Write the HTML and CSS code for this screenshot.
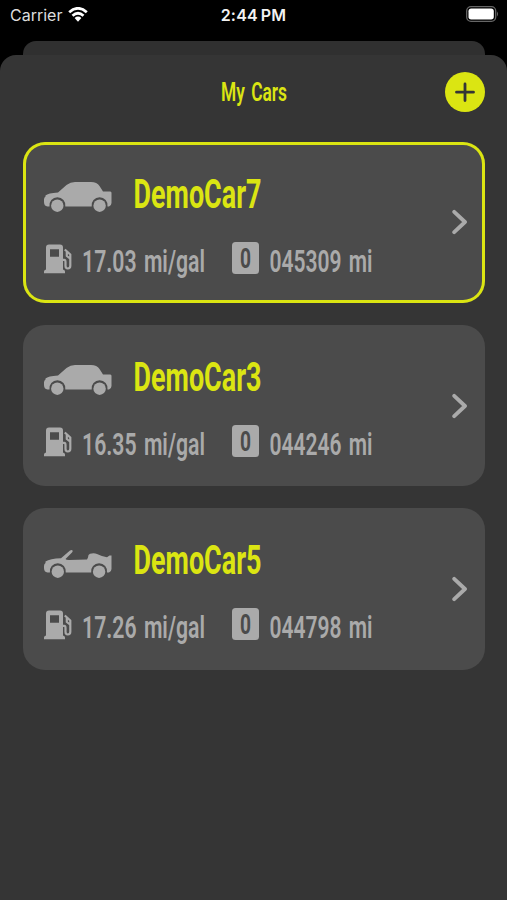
FILE: index.html
```
<!DOCTYPE html>
<html lang="en">
<head>
<meta charset="utf-8">
<title>My Cars</title>
<link rel="stylesheet" href="styles.css">
</head>
<body>
<svg class="defs" aria-hidden="true">
  <symbol id="sedan" viewBox="0 0 68 32">
    <path d="M3.500 25.500 Q0 25 0 21 V18.500 Q0 16.500 1.500 15.500 V14.500 Q4 12 14 11.500 L22.500 4 Q26.500 1 31 1 H47 Q53 1 55.500 5 L59 10.500 H66.500 Q68 11 67.500 13 V22 Q67.500 24.500 65 25.500 H63.500 A8 8 0 1 0 47.700 25.500 H21.300 A8 8 0 1 0 5.500 25.500Z"/>
    <circle cx="13.300" cy="24.700" r="6.200"/><circle cx="55.600" cy="24.700" r="6.200"/>
  </symbol>
  <symbol id="roadster" viewBox="0 0 68 32">
    <path d="M3.500 25.500 Q0 25 0 21 V19 Q0 17 1.500 16 V14.500 Q6 11.500 17 11.200 L26 3.500 Q27.800 2.300 28.600 3.500 Q29 4.500 28 5.500 L21.500 12 Q22 13 25 13 L43 12.500 L44 10.500 Q44 7.500 46 6.800 Q50 5.700 53 7 Q58 9.500 63 10.300 L65.500 8.500 H67.500 V22 Q67.500 24.500 65 25.500 H63 A8 8 0 1 0 47.200 25.500 H21.700 A8 8 0 1 0 5.900 25.500Z"/>
    <circle cx="13.800" cy="24.700" r="6.200"/><circle cx="55.100" cy="24.700" r="6.200"/>
  </symbol>
  <symbol id="pump" viewBox="0 0 28 30">
    <path fill-rule="evenodd" d="M2 25.500 V3.500 Q2 .5 5 .5 H16 Q19 .5 19 3.500 V25.500 Q21 26 21 27.500 V29.300 H0 V27.500 Q0 26 2 25.500Z M6 5.200 V12.700 H15 V5.200Z"/>
    <path class="hose" d="M19 15.800 H20.200 Q21.500 15.800 21.500 18 V21.800 Q21.500 24.500 23.800 24.500 Q26.300 24.500 26.300 21.800 V10.500 L20.800 5.500 M22.800 8 V12 L26 14.500"/>
  </symbol>
  <symbol id="chevron" viewBox="0 0 16 26"><path class="arrow" d="M2.200 2.800 L13 13 L2.200 23.200"/></symbol>
</svg>
<header class="status">
  <span class="carrier">Carrier
    <svg class="wifi" viewBox="0 0 20 15"><path class="waves" d="M1.200 5.200 Q10-2.500 18.800 5.200 M4.500 8.700 Q10 3.800 15.500 8.700"/><path d="M6.600 11 Q10 8.200 13.400 11 L10 14.800Z"/></svg>
  </span>
  <span class="clock">2:44<span class="meridiem">PM</span></span>
  <svg class="battery" viewBox="0 0 33 16"><rect class="shell" x=".7" y=".7" width="29" height="14.600" rx="4.300"/><rect x="2.500" y="2.500" width="25.300" height="11" rx="2.700"/><path class="tip" d="M31 5.500 Q33 8 31 10.500Z"/></svg>
</header>
<div class="backsheet"></div>
<main class="sheet">
  <div class="titlebar">
    <svg class="title" width="68" height="36"><text x="1" y="26" textLength="66" lengthAdjust="spacingAndGlyphs">My Cars</text></svg>
    <button class="add" aria-label="Add car"><svg viewBox="0 0 40 40"><path d="M20 12 V28.500 M11.500 20.200 H28.500"/></svg></button>
  </div>
  <section class="cars">
    <article class="card selected">
      <div class="details">
        <div class="heading"><svg class="car"><use href="#sedan"/></svg><svg class="name" width="130" height="48"><text x=".5" y="36" textLength="128" lengthAdjust="spacingAndGlyphs">DemoCar7</text></svg></div>
        <div class="stats"><svg class="pump"><use href="#pump"/></svg><svg class="stat economy" width="124" height="40"><text x="0" y="30" textLength="123" lengthAdjust="spacingAndGlyphs">17.03 mi/gal</text></svg><svg class="badge" width="27" height="32"><rect width="27" height="32" rx="3.500"/><text x="8" y="26" textLength="11" lengthAdjust="spacingAndGlyphs">0</text></svg><svg class="stat" width="104" height="40"><text x="-.5" y="30" textLength="103" lengthAdjust="spacingAndGlyphs">045309 mi</text></svg></div>
      </div>
      <svg class="chevron"><use href="#chevron"/></svg>
    </article>
    <article class="card">
      <div class="details">
        <div class="heading"><svg class="car"><use href="#sedan"/></svg><svg class="name" width="130" height="48"><text x=".5" y="36" textLength="128" lengthAdjust="spacingAndGlyphs">DemoCar3</text></svg></div>
        <div class="stats"><svg class="pump"><use href="#pump"/></svg><svg class="stat economy" width="124" height="40"><text x="0" y="30" textLength="123" lengthAdjust="spacingAndGlyphs">16.35 mi/gal</text></svg><svg class="badge" width="27" height="32"><rect width="27" height="32" rx="3.500"/><text x="8" y="26" textLength="11" lengthAdjust="spacingAndGlyphs">0</text></svg><svg class="stat" width="104" height="40"><text x="-.5" y="30" textLength="103" lengthAdjust="spacingAndGlyphs">044246 mi</text></svg></div>
      </div>
      <svg class="chevron"><use href="#chevron"/></svg>
    </article>
    <article class="card">
      <div class="details">
        <div class="heading"><svg class="car"><use href="#roadster"/></svg><svg class="name" width="130" height="48"><text x=".5" y="36" textLength="128" lengthAdjust="spacingAndGlyphs">DemoCar5</text></svg></div>
        <div class="stats"><svg class="pump"><use href="#pump"/></svg><svg class="stat economy" width="124" height="40"><text x="0" y="30" textLength="123" lengthAdjust="spacingAndGlyphs">17.26 mi/gal</text></svg><svg class="badge" width="27" height="32"><rect width="27" height="32" rx="3.500"/><text x="8" y="26" textLength="11" lengthAdjust="spacingAndGlyphs">0</text></svg><svg class="stat" width="104" height="40"><text x="-.5" y="30" textLength="103" lengthAdjust="spacingAndGlyphs">044798 mi</text></svg></div>
      </div>
      <svg class="chevron"><use href="#chevron"/></svg>
    </article>
  </section>
</main>
</body>
</html>
```
FILE: styles.css
```
* { box-sizing: border-box; }
body {
  margin: 0;
  height: 900px;
  display: flex;
  flex-direction: column;
  overflow: hidden;
  background: #000;
  font-family: Roboto, sans-serif;
}
svg { display: block; flex: none; }
.defs { position: absolute; width: 0; height: 0; }
.status {
  height: 41px;
  padding: 6px 8px 0 10px;
  display: grid;
  grid-template-columns: 1fr auto 1fr;
  align-items: start;
  font: 16px/19px Inter, sans-serif;
  color: #ddd;
}
.carrier { display: flex; gap: 6px; }
.wifi { width: 20px; height: 15px; margin-top: 1px; fill: #fff; }
.waves { fill: none; stroke: #fff; stroke-width: 2.800; }
.clock { font-weight: 600; color: #f2f2f2; letter-spacing: .2px; margin-left: -2px; }
.meridiem { margin-left: 3px; }
.battery { width: 33px; height: 16px; justify-self: end; fill: #fff; }
.shell { fill: none; stroke: #666; stroke-width: 1.300; }
.tip { fill: #666; }
.backsheet {
  height: 28px;
  margin: 0 22px -14px 23px;
  flex: none;
  border-radius: 13px 13px 0 0;
  background: #303030;
}
.sheet {
  flex: 1;
  position: relative;
  border-radius: 16px 16px 0 0;
  background: #353535;
}
.titlebar {
  height: 86.5px;
  padding: 17px 22px 0;
  display: grid;
  grid-template-columns: 1fr auto 1fr;
  align-items: start;
}
.title {
  grid-column: 2;
  margin-top: 3px;
  font-size: 25.5px;
  font-weight: 600;
  word-spacing: 3px;
  fill: #dbe512;
}
.add {
  width: 40px;
  height: 40px;
  padding: 0;
  border: 0;
  border-radius: 50%;
  background: #dbe512;
  justify-self: end;
}
.add path { fill: none; stroke: #353535; stroke-width: 2.800; stroke-linecap: round; }
.cars { padding: 0 22px 0 23px; display: grid; gap: 22px; }
.card {
  height: 161.4px;
  padding: 0 17px 0 21px;
  display: flex;
  align-items: center;
  justify-content: space-between;
  border-radius: 22px;
  background: #4b4b4b;
  fill: #aaa;
}
.selected { box-shadow: inset 0 0 0 3px #dbe512; }
.details { height: 100%; padding-top: 30px; }
.heading { display: flex; gap: 21px; height: 44px; }
.car { width: 68px; height: 32px; margin-top: 9px; }
.name { font-size: 40.500px; font-weight: 700; fill: #dbe512; }
.stats { margin-top: 26px; display: flex; }
.pump { width: 28px; height: 30px; margin: 2px 10px 0 0; }
.hose { fill: none; stroke: #aaa; stroke-width: 2.200; stroke-linejoin: round; }
.stat { font-size: 32px; font-weight: 650; word-spacing: 3px; overflow: visible; }
.economy { margin-right: 26px; }
.badge { margin-right: 11px; font-size: 27.500px; font-weight: 700; }
.badge text { fill: #4b4b4b; }
.chevron { width: 16px; height: 26px; }
.arrow { fill: none; stroke: #aaa; stroke-width: 3.800; stroke-linecap: round; stroke-linejoin: round; }
```
